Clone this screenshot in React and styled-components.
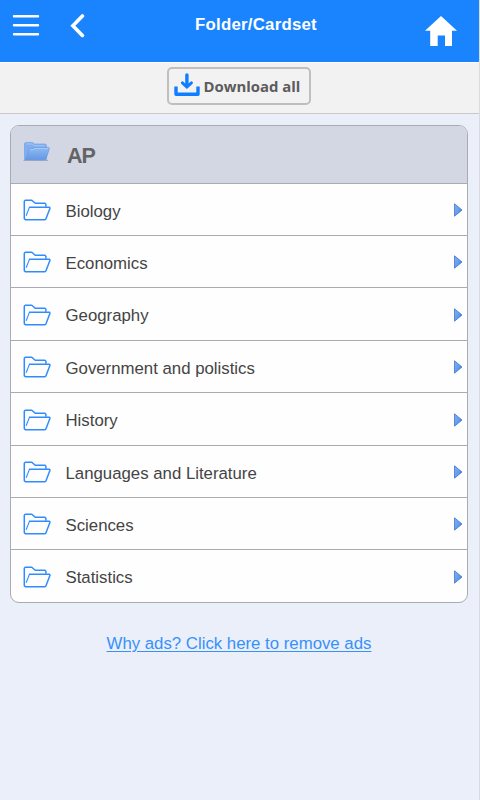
import React from "react";
import styled, { createGlobalStyle } from "styled-components";

const folders = [
  "Biology",
  "Economics",
  "Geography",
  "Government and polistics",
  "History",
  "Languages and Literature",
  "Sciences",
  "Statistics",
];

const MenuIcon = () => (
  <svg width="28" height="24" viewBox="0 0 28 24">
    <path
      d="M2 3.2H26M2 12.2H26M2 21.2H26"
      stroke="#fff"
      strokeWidth="2.4"
      strokeLinecap="round"
    />
  </svg>
);

const BackIcon = () => (
  <svg width="16" height="24" viewBox="0 0 16 24">
    <path
      d="M13.4 2L3.9 11.7L13.4 21.4"
      fill="none"
      stroke="#fff"
      strokeWidth="3.6"
      strokeLinecap="round"
    />
  </svg>
);

const HomeIcon = () => (
  <svg width="32" height="30" viewBox="0 0 32 30">
    <path
      d="M16 0L32 14.7H27V30H20V19.5H12.7V30H5.2V14.7H0Z"
      fill="#fff"
    />
  </svg>
);

const DownloadIcon = () => (
  <svg width="26" height="24" viewBox="0 0 26 24">
    <path
      d="M2 13.5V21.3H24V13.5"
      fill="none"
      stroke="#0f7dff"
      strokeWidth="3.4"
      strokeLinejoin="round"
    />
    <path
      d="M12.9 2V13"
      stroke="#0f7dff"
      strokeWidth="3.4"
      strokeLinecap="round"
    />
    <path
      d="M8.4 9.8L12.9 14L17.4 9.8"
      fill="none"
      stroke="#0f7dff"
      strokeWidth="3"
      strokeLinecap="round"
    />
  </svg>
);

const FolderIcon = () => (
  <svg width="28" height="22" viewBox="0 0 28 22">
    <path
      d="M1.6 20.4L1.3 19.4V2.2L2.2 1.3H8.8L12.2 4.3H22L22.9 5.2V7.8"
      fill="none"
      stroke="#2f8cff"
      strokeWidth="1.5"
      strokeLinejoin="round"
    />
    <path
      d="M6 8.2H26.6L27 9.2L22.9 20L21.8 20.8H2.4L1.4 19.8"
      fill="none"
      stroke="#2f8cff"
      strokeWidth="1.5"
      strokeLinejoin="round"
    />
    <path d="M6.4 8.4L3.2 16.8" stroke="#2f8cff" strokeWidth="1.1" />
  </svg>
);

const OpenFolderIcon = () => (
  <svg width="28" height="21" viewBox="0 0 28 21">
    <defs>
      <linearGradient id="folderFront" x1="0" y1="0" x2="0" y2="1">
        <stop offset="0" stopColor="#8fbbf3" />
        <stop offset="1" stopColor="#6498e6" />
      </linearGradient>
    </defs>
    <path d="M0.5 19.4H25" stroke="#a2aabd" strokeWidth="1.2" />
    <path
      d="M1.5 18.5V2.2L2.5 1.4H9.8L11.2 3H22.5L23.3 4V18Z"
      fill="#80aeee"
      stroke="#78a5e6"
      strokeWidth="0.8"
    />
    <path d="M3 3H9.5L11 4.8H22" fill="none" stroke="#a5c8f6" />
    <path
      d="M2.3 18.8L6.2 8.5L7 7.6H10L11 6.4H25.8L26.4 7.4L22.8 18.8Z"
      fill="url(#folderFront)"
      stroke="#6796df"
      strokeWidth="0.7"
    />
    <path d="M7 8.6H10.6L11.6 7.4H25.4" fill="none" stroke="#b1cff7" strokeWidth="0.8" />
  </svg>
);

const ArrowIcon = () => (
  <svg width="9" height="14" viewBox="0 0 9 14">
    <defs>
      <linearGradient id="arrowFill" x1="0" y1="0" x2="1" y2="1">
        <stop offset="0" stopColor="#82b0f2" />
        <stop offset="0.55" stopColor="#659de9" />
        <stop offset="1" stopColor="#1f5fcb" />
      </linearGradient>
    </defs>
    <path
      d="M0.5 0.8L8 7L0.5 13.2Z"
      fill="url(#arrowFill)"
      stroke="#3d75d0"
      strokeWidth="0.8"
    />
  </svg>
);

const App = () => {
  return (
    <Page>
      <GlobalStyle />
      <Header>
        <MenuButton aria-label="Menu">
          <MenuIcon />
        </MenuButton>
        <BackButton aria-label="Back">
          <BackIcon />
        </BackButton>
        <Title>Folder/Cardset</Title>
        <HomeButton aria-label="Home">
          <HomeIcon />
        </HomeButton>
      </Header>
      <Toolbar>
        <DownloadButton>
          <DownloadIcon />
          <span>Download all</span>
        </DownloadButton>
      </Toolbar>
      <FolderList>
        <ListHeader>
          <OpenFolderIcon />
          <ListTitle>AP</ListTitle>
        </ListHeader>
        {folders.map((name) => (
          <FolderRow key={name}>
            <FolderIcon />
            <FolderName>{name}</FolderName>
            <ArrowIcon />
          </FolderRow>
        ))}
      </FolderList>
      <AdsLink href="#">Why ads? Click here to remove ads</AdsLink>
    </Page>
  );
};

export default App;

const GlobalStyle = createGlobalStyle`
  * {
    box-sizing: border-box;
  }
  body {
    margin: 0;
    font-family: "Liberation Sans", Arial, sans-serif;
    font-size: 16.8px;
  }
  svg {
    display: block;
    flex: none;
  }
`;
const Page = styled.div`
  display: flex;
  flex-direction: column;
  height: 800px;
  overflow: hidden;
  background-color: #ebeff9;
  border-right: 1px solid #d8dbe2;
`;
const Header = styled.header`
  display: grid;
  grid-template-columns: 68px 100px 175px 1fr;
  align-items: start;
  height: 62px;
  flex: none;
  background-color: #1a84ff;
`;
const IconButton = styled.button`
  padding: 0;
  border: none;
  background: none;
`;
const MenuButton = styled(IconButton)`
  margin: 13px 0 0 12px;
`;
const BackButton = styled(IconButton)`
  margin: 14px 0 0 1px;
`;
const HomeButton = styled(IconButton)`
  justify-self: end;
  margin: 16px 22px 0 0;
`;
const Title = styled.h1`
  margin: 15px 0 0 1px;
  color: #fff;
  font-size: 16.8px;
  line-height: 20px;
  letter-spacing: 0.25px;
  text-align: center;
`;
const Toolbar = styled.div`
  display: flex;
  justify-content: center;
  height: 52px;
  flex: none;
  padding-top: 4px;
  background-color: #f2f2f2;
  border-top: 1px solid #fff;
  border-bottom: 1px solid #c8c8c8;
`;
const DownloadButton = styled.button`
  display: flex;
  align-items: center;
  gap: 3px;
  width: 144px;
  height: 38px;
  margin-right: 2px;
  padding: 0 0 1px 5px;
  color: #5c5c5c;
  background-color: #f2f2f2;
  border: 2px solid #bfbfbf;
  border-radius: 5px;
  font-family: "Open Sans", sans-serif;
  font-size: 14.9px;
  font-weight: 700;
  white-space: nowrap;
  svg {
    margin-top: -2px;
  }
  span {
    padding: 1px 0 0 1px;
  }
`;
const FolderList = styled.div`
  flex: none;
  margin: 11px 11px 0 10px;
  overflow: hidden;
  background-color: #fefefe;
  border: 1px solid #a8abb2;
  border-radius: 9px;
`;
const ListHeader = styled.div`
  display: flex;
  align-items: flex-start;
  height: 56.6px;
  padding: 15px 0 0 12px;
  background-color: #d3d7e3;
`;
const ListTitle = styled.h2`
  margin: 2px 0 0 16px;
  color: #646464;
  font-size: 21.5px;
  line-height: 26px;
  letter-spacing: -1px;
`;
const FolderRow = styled.div`
  display: flex;
  align-items: center;
  height: 52.4px;
  padding: 1.6px 4px 0 12px;
  border-top: 1px solid #a8abb2;
`;
const FolderName = styled.span`
  flex: 1;
  padding: 3px 0 0 14.5px;
  color: #444;
`;
const AdsLink = styled.a`
  align-self: center;
  margin: 31px 1px 0 0;
  color: #3791fa;
  line-height: 20px;
  text-underline-offset: 2px;
`;
